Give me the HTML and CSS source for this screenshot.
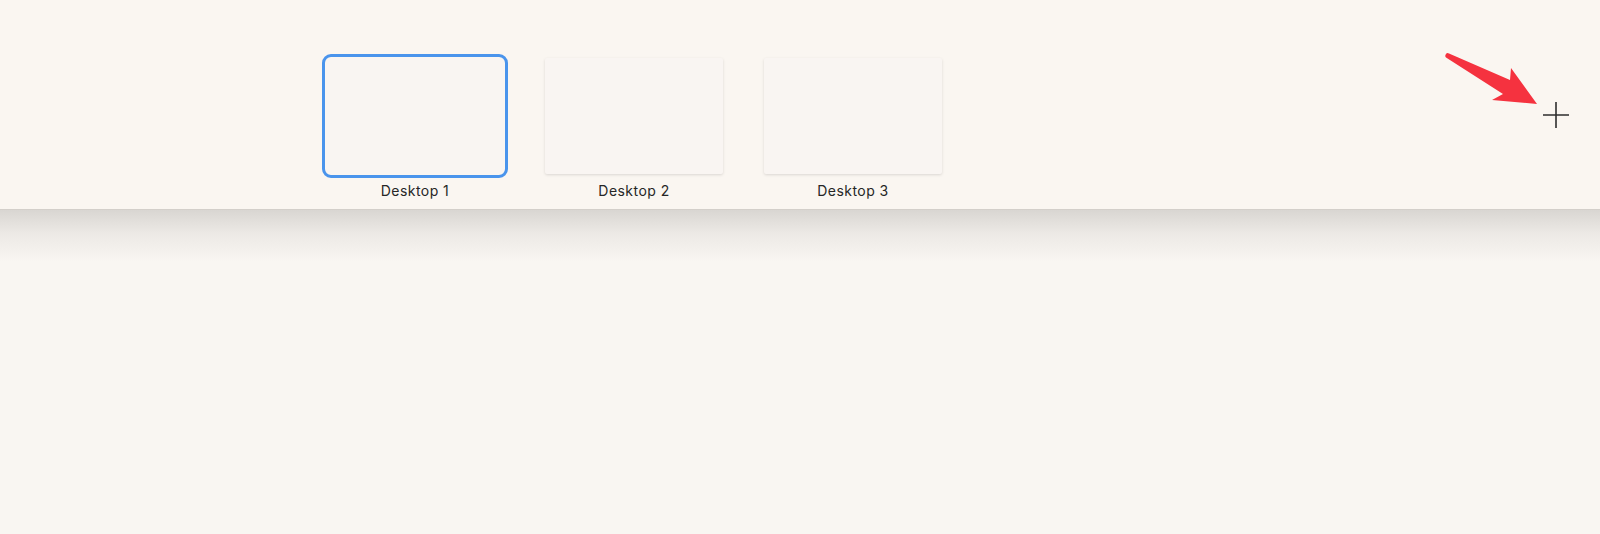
FILE: index.html
```html
<!DOCTYPE html>
<html lang="en">
<head>
  <meta charset="UTF-8" />
  <title>Spaces</title>
  <link rel="stylesheet" href="styles.css">
</head>
<body>
  <header class="spaces-bar">
    <div class="space active">
      <div class="thumb"></div>
      <span class="label">Desktop 1</span>
    </div>
    <div class="space">
      <div class="thumb"></div>
      <span class="label">Desktop 2</span>
    </div>
    <div class="space">
      <div class="thumb"></div>
      <span class="label">Desktop 3</span>
    </div>

    <button class="add-btn" aria-label="Add desktop">
      <svg width="26" height="26" viewBox="0 0 26 26">
        <path d="M13 0 V26 M0 13 H26" stroke="#2e2e2e" stroke-width="1.6" fill="none"/>
      </svg>
    </button>

    <!-- annotation arrow pointing at the add button -->
    <svg class="arrow" width="100" height="60" viewBox="0 0 100 60">
      <path d="M6 4 Q7 2.5 9 3.5 L70 30 L71 18 L97 54 L52 50 L63 44 L6 7.5 Q4.5 6 6 4 Z" fill="#f5323f"/>
    </svg>
  </header>
  <div class="bar-shadow"></div>
</body>
</html>
```

FILE: styles.css
```css
body {
  margin: 0;
  background: #f9f6f2;
  font-family: Inter, "Noto Sans", sans-serif;
  color: #222;
}
.spaces-bar {
  position: relative;
  box-sizing: border-box;
  height: 210px;
  display: flex;
  align-items: flex-start;
  gap: 41px;
  padding: 58px 31px 0 326px;
  background: #faf6f1;
  border-bottom: 1px solid #d3cfca;
}
.space {
  display: flex;
  flex-direction: column;
  align-items: center;
}
.thumb {
  width: 178px;
  height: 116px;
  background: #f9f5f2;
  border-radius: 2px;
  box-shadow: 0 1px 3px rgba(0, 0, 0, 0.13);
}
.space.active .thumb {
  box-shadow: none;
  border-radius: 5px;
  outline: 3px solid #4a94ec;
  outline-offset: 1px;
}
.label {
  margin-top: 8px;
  font-size: 14px;
  letter-spacing: 0.45px;
  line-height: 18px;
  color: #262626;
}
.add-btn {
  margin: 44px 0 0 auto;
  padding: 0;
  border: none;
  background: none;
  width: 26px;
  height: 26px;
}
.add-btn svg {
  display: block;
}
.arrow {
  position: absolute;
  left: 1440px;
  top: 50px;
}
.bar-shadow {
  height: 52px;
  background: linear-gradient(#d9d6d2, #ece9e5 45%, #f9f6f2);
}
```
